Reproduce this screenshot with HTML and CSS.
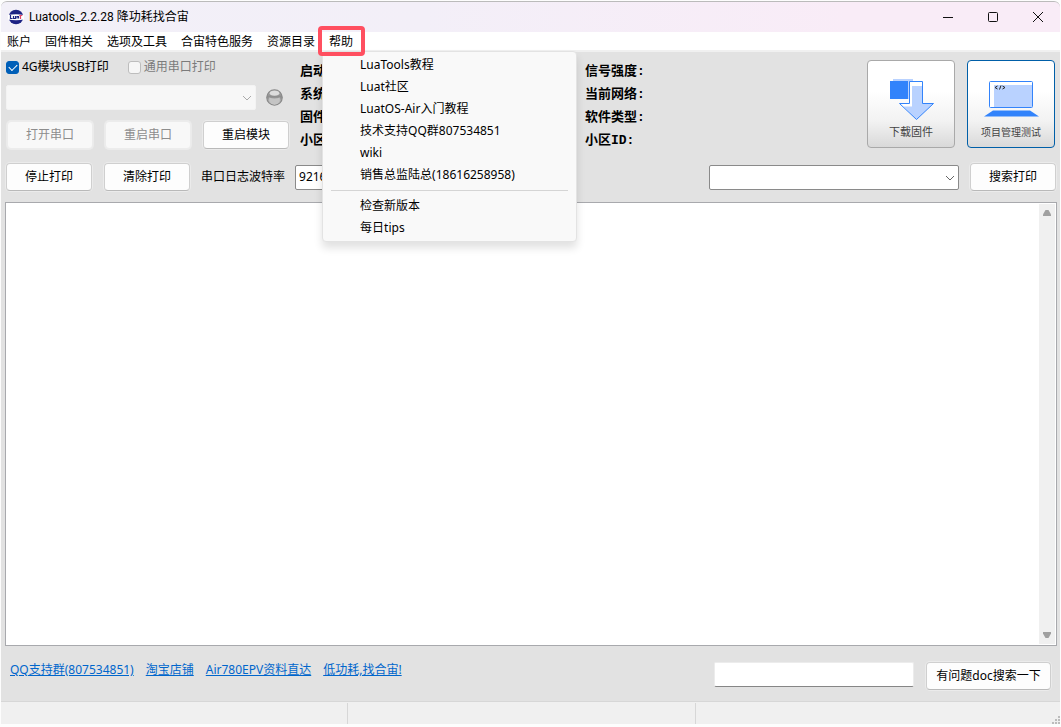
FILE: index.html
```html
<!DOCTYPE html>
<html lang="zh-CN">
<head>
<meta charset="utf-8">
<title>Luatools_2.2.28 降功耗找合宙</title>
<link rel="stylesheet" href="styles.css">
</head>
<body>
<div class="window">
  <header class="titlebar">
    <svg class="logo" viewBox="0 0 16 16" aria-hidden="true">
      <circle cx="8" cy="8" r="7.300" fill="#1d2384"/>
      <path d="M0 6q8-1.500 16 0v4.500q-8 1.500-16 0z" fill="#fff"/>
      <path d="M2.500 6v3.500h2M5.500 7v2.500h2V7" stroke="#1d2384" stroke-width="1.200" fill="none"/>
      <path d="M9 9.500V7.500h1.500v2" stroke="#1d2384" stroke-width="1.200" fill="none"/>
      <path d="M11.300 6.500h3M12.500 6.500v3.500" stroke="#e0456a" stroke-width="1.200" fill="none"/>
    </svg>
    <h1 class="title">Luatools_2.2.28 降功耗找合宙</h1>
    <div class="window-controls">
      <button class="window-button" type="button" aria-label="最小化"><svg viewBox="0 0 12 12"><path d="M1 6.500h10"/></svg></button>
      <button class="window-button" type="button" aria-label="最大化"><svg viewBox="0 0 12 12"><rect x="1.500" y="1.500" width="9" height="9" rx="1"/></svg></button>
      <button class="window-button" type="button" aria-label="关闭"><svg viewBox="0 0 12 12"><path d="M1 1l10 10M11 1L1 11"/></svg></button>
    </div>
  </header>

  <nav class="menubar">
    <button class="menu-title" type="button">账户</button>
    <button class="menu-title" type="button">固件相关</button>
    <button class="menu-title" type="button">选项及工具</button>
    <button class="menu-title" type="button">合宙特色服务</button>
    <button class="menu-title" type="button">资源目录</button>
    <div class="menu-open">
      <button class="menu-title menu-title-active" type="button" aria-expanded="true">帮助</button>
      <div class="menu" role="menu">
        <button class="menu-item" type="button" role="menuitem">LuaTools教程</button>
        <button class="menu-item" type="button" role="menuitem">Luat社区</button>
        <button class="menu-item" type="button" role="menuitem">LuatOS-Air入门教程</button>
        <button class="menu-item" type="button" role="menuitem">技术支持QQ群807534851</button>
        <button class="menu-item" type="button" role="menuitem">wiki</button>
        <button class="menu-item" type="button" role="menuitem">销售总监陆总(18616258958)</button>
        <hr class="menu-separator">
        <button class="menu-item" type="button" role="menuitem">检查新版本</button>
        <button class="menu-item" type="button" role="menuitem">每日tips</button>
      </div>
    </div>
  </nav>

  <main class="content">
    <section class="top">
      <div class="port">
        <div class="checks">
          <label class="check"><input type="checkbox" checked>4G模块USB打印</label>
          <label class="check check-disabled"><input type="checkbox" disabled>通用串口打印</label>
        </div>
        <div class="port-row">
          <div class="combo combo-port">
            <select class="select" disabled aria-label="串口"><option></option></select>
            <svg class="chevron" viewBox="0 0 10 6"><path d="M1 1l4 4 4-4"/></svg>
          </div>
          <svg class="led" viewBox="0 0 16 16" aria-hidden="true">
            <defs><linearGradient id="led" x2="0" y2="1"><stop offset="0" stop-color="#bbb"/><stop offset=".45" stop-color="#8d8d8d"/><stop offset="1" stop-color="#d8d8d8"/></linearGradient></defs>
            <circle cx="8" cy="8" r="7.300" fill="url(#led)" stroke="#888" stroke-width="1"/>
            <ellipse cx="8" cy="4" rx="4.500" ry="2.300" fill="#ddd"/>
            <path d="M3 8q5 2 10 0v3l-2 2.500q-3 1.500-6 0L3 11z" fill="#c4c4c4"/>
          </svg>
        </div>
        <div class="buttons">
          <button class="button" type="button" disabled>打开串口</button>
          <button class="button" type="button" disabled>重启串口</button>
          <button class="button" type="button">重启模块</button>
        </div>
      </div>
      <div class="info info-left">
        <span>启动</span><span>系统</span><span>固件</span><span>小区</span>
      </div>
      <div class="info">
        <span>信号强度:</span><span>当前网络:</span><span>软件类型:</span><span>小区ID:</span>
      </div>
      <div class="actions">
        <button class="action" type="button">
          <svg class="action-art" viewBox="0 0 70 44" aria-hidden="true">
            <path d="M17 2h20v20H17z" fill="#b9d2ff"/>
            <path d="M14 4h18v18H14z" fill="#3283fb"/>
            <path d="M33.500 4.500h13v22h11L40.500 42.500l-17-16h10z" fill="#fff"/>
            <path d="M36 9h10.500v17.500h11L40.500 42.500l-13-13H36z" fill="#b9d2ff"/>
            <path d="M33.500 4.500h13v22h11L40.500 42.500l-17-16h10z" fill="none" stroke="#3283fb"/>
          </svg>
          <span class="action-text action-text-wide">下载固件</span>
        </button>
        <button class="action action-focus" type="button">
          <svg class="action-art" viewBox="0 0 70 44" aria-hidden="true">
            <rect x="13.500" y="4.500" width="43" height="26" rx="1" fill="#fff"/>
            <path d="M18 8h38v22H18z" fill="#b9d2ff"/>
            <rect x="13.500" y="4.500" width="43" height="26" rx="1" fill="none" stroke="#3283fb"/>
            <path d="M21.500 9l-2.500 1.500 2.500 1.500M25 8.500l-1.500 4M26.500 9l2.500 1.500-2.500 1.500" fill="none" stroke="#222"/>
            <path d="M17 33.500h37l9 6H8z" fill="#3283fb"/>
          </svg>
          <span class="action-text">项目管理测试</span>
        </button>
      </div>
    </section>

    <section class="toolbar">
      <div class="buttons">
        <button class="button" type="button">停止打印</button>
        <button class="button" type="button">清除打印</button>
      </div>
      <label class="baud-label" for="baud">串口日志波特率</label>
      <div class="combo combo-baud">
        <select class="select" id="baud"><option>921600</option></select>
      </div>
      <div class="combo combo-search">
        <select class="select" aria-label="搜索内容"><option></option></select>
        <svg class="chevron" viewBox="0 0 10 6"><path d="M1 1l4 4 4-4"/></svg>
      </div>
      <button class="button" type="button">搜索打印</button>
    </section>

    <section class="log">
      <textarea class="log-text" aria-label="日志"></textarea>
      <div class="scrollbar" aria-hidden="true">
        <svg viewBox="0 0 10 8"><path d="M3.500 1h3L9 5.500V7H1V5.500z"/></svg>
        <svg viewBox="0 0 10 8"><path d="M3.500 7h3L9 2.500V1H1v1.500z"/></svg>
      </div>
    </section>

    <footer class="footer">
      <div class="links">
        <a href="#qq">QQ支持群(807534851)</a>
        <a href="#taobao">淘宝店铺</a>
        <a href="#air780epv">Air780EPV资料直达</a>
        <a href="#lowpower">低功耗,找合宙!</a>
      </div>
      <input class="doc-input" type="text" aria-label="文档搜索">
      <button class="button button-doc" type="button">有问题doc搜索一下</button>
    </footer>
  </main>

  <div class="statusbar">
    <div class="status-cell"></div>
    <div class="status-cell"></div>
    <div class="status-cell"></div>
    <svg class="grip" viewBox="0 0 9 9" aria-hidden="true"><path d="M7 1h2v2H7zM4 4h2v2H4zM7 4h2v2H7zM1 7h2v2H1zM4 7h2v2H4zM7 7h2v2H7z"/></svg>
  </div>
</div>
</body>
</html>
```

FILE: styles.css
```css
* {
  box-sizing: border-box;
}

body {
  margin: 0;
  background: #fdfdfd;
}

body,
button,
input,
select,
textarea {
  font: 12px/16px "Noto Sans", "Noto Sans CJK SC", sans-serif;
  color: #000;
}

.window {
  display: flex;
  flex-direction: column;
  min-height: 100vh;
  padding: 1px 1px 3px;
}

/* Title bar */
.titlebar {
  display: flex;
  align-items: center;
  height: 31px;
  padding-left: 7px;
  border-top: 1px solid #bbb;
  border-radius: 6px 6px 0 0;
  background: linear-gradient(90deg, #f2f0f8, #f3eff8 40%, #f9ecf7 80%);
}

.logo {
  width: 16px;
  height: 16px;
}

.title {
  flex: 1;
  margin: 0 0 0 5px;
  font-family: Roboto, "Noto Sans CJK SC", sans-serif;
  font-size: 12px;
  font-weight: 400;
}

.window-controls {
  display: flex;
}

.window-button {
  display: grid;
  place-items: center;
  width: 45px;
  height: 30px;
  padding: 0;
  border: 0;
  background: none;
}

.window-button svg {
  width: 12px;
  height: 12px;
  fill: none;
  stroke: #111;
}

/* Menu bar */
.menubar {
  display: flex;
  gap: 14px;
  height: 20px;
  padding-left: 6px;
  border-bottom: 2px solid #f0f0f0;
  background: #fff;
}

.menu-title {
  padding: 0;
  border: 0;
  background: none;
  line-height: 20px;
}

.menu-open {
  position: relative;
}

.menu-open::after {
  content: "";
  position: absolute;
  z-index: 2;
  inset: -6px -12px -6px -11px;
  border: 4px solid #ff4f60;
  border-radius: 4px;
}

.menu {
  position: absolute;
  z-index: 1;
  top: 19px;
  left: -7px;
  width: 255px;
  padding: 2px 0;
  border: 1px solid #e3e3e3;
  border-radius: 4px;
  background: #f9f9f9;
  box-shadow: 0 6px 9px rgba(0, 0, 0, 0.12);
}

.menu-item {
  display: block;
  width: 100%;
  height: 22px;
  padding: 0 0 0 37px;
  border: 0;
  background: none;
  text-align: left;
}

.menu-separator {
  height: 1px;
  margin: 4px 8px;
  border: 0;
  background: #d5d5d5;
}

/* Content */
.content {
  display: flex;
  flex: 1;
  flex-direction: column;
  background: #e2e2e2;
}

.top {
  display: flex;
  padding: 8px 5px 0;
}

.port {
  width: 294px;
}

.checks {
  display: flex;
  gap: 19px;
  height: 14px;
}

.check {
  display: flex;
  align-items: center;
  gap: 3px;
}

.check input {
  appearance: none;
  display: grid;
  place-items: center;
  width: 13px;
  height: 13px;
  margin: 0;
  border: 1px solid #bdbdbd;
  border-radius: 3px;
  background: #f6f6f6;
}

.check input:checked {
  border-color: #005fb8;
  background: #005fb8;
}

.check input:checked::before {
  content: "";
  width: 7px;
  height: 4px;
  margin-bottom: 2px;
  border: solid #fff;
  border-width: 0 0 1px 1px;
  transform: rotate(-45deg);
}

.check-disabled {
  color: #7b7b7b;
}

.port-row {
  display: flex;
  align-items: center;
  gap: 10px;
  margin-top: 11px;
}

.led {
  width: 17px;
  height: 17px;
}

.combo {
  position: relative;
  height: 25px;
}

.select {
  appearance: none;
  display: block;
  width: 100%;
  height: 100%;
  padding: 0 3px;
  border: 1px solid #8a8a8a;
  border-radius: 2px;
  background: #fff;
}

.select:disabled {
  border-color: #f3f3f3;
  background: #f7f7f7;
  opacity: 1;
}

.chevron {
  position: absolute;
  top: 10px;
  right: 4px;
  width: 10px;
  height: 6px;
  fill: none;
  stroke: #666;
  pointer-events: none;
}

.select:disabled + .chevron {
  stroke: #aaa;
}

.combo-port {
  width: 250px;
}

.port .buttons {
  margin: 11px 0 0 1px;
}

.buttons {
  display: flex;
  gap: 12px;
}

.button {
  flex: none;
  width: 86px;
  height: 28px;
  padding: 0;
  border: 1px solid #cfcfcf;
  border-bottom-color: #b9b9b9;
  border-radius: 4px;
  background: #fdfdfd;
  box-shadow: 0 0 0 1px #ebebeb;
}

.button:disabled {
  border-color: #ececec;
  background: #f8f8f8;
  color: #8d8d8d;
}

.info {
  display: flex;
  flex: 1;
  flex-direction: column;
  font: bold 13px/23px "Liberation Mono", "Noto Sans CJK SC", monospace;
}

.info-left {
  flex: none;
  width: 285px;
}

.actions {
  display: flex;
  gap: 12px;
}

.action {
  display: flex;
  flex-direction: column;
  align-items: center;
  width: 88px;
  height: 88px;
  padding: 16px 0 0;
  border: 1px solid #a9a9a9;
  border-radius: 4px;
  background: linear-gradient(#fff 35%, #f2f2f2 70%, #d9d9d9);
}

.action-focus {
  border-color: #005fa8;
}

.action-art {
  width: 70px;
  height: 44px;
}

.action-text {
  margin-top: 3px;
  font-size: 10px;
  color: #444;
}

.action-text-wide {
  font-size: 11px;
}

/* Print toolbar */
.toolbar {
  display: flex;
  align-items: center;
  margin-top: 11px;
  padding: 0 5px;
}

.baud-label {
  margin-left: 11px;
}

.combo-baud {
  width: 90px;
  margin-left: 10px;
}

.combo-search {
  width: 250px;
  margin: 0 11px 0 auto;
}

.toolbar > .button {
  margin-right: -1px;
}

/* Log */
.log {
  display: flex;
  flex: 1;
  margin: 11px 3px 0 4px;
  padding: 1px;
  border: 1px solid #a8a9ad;
  background: #fff;
}

.log-text {
  flex: 1;
  border: 0;
  outline: 0;
  resize: none;
}

.scrollbar {
  display: flex;
  flex-direction: column;
  justify-content: space-between;
  align-items: center;
  width: 16px;
  padding: 5px 0;
  background: #f0f0f0;
}

.scrollbar svg {
  width: 10px;
  height: 8px;
  fill: #a0a0a0;
}

/* Footer */
.footer {
  display: flex;
  align-items: flex-start;
  padding: 16px 9px 11px;
}

.links {
  display: flex;
  flex: 1;
  gap: 12px;
}

.links a {
  color: #0066cc;
}

.doc-input {
  width: 200px;
  height: 25px;
  border: 1px solid #ececec;
  border-bottom-color: #868686;
  border-radius: 2px;
  background: #fff;
}

.button-doc {
  width: 125px;
  margin-left: 12px;
}

/* Status bar */
.statusbar {
  position: relative;
  display: grid;
  grid-template-columns: repeat(3, 1fr);
  height: 23px;
  padding: 1px 17px 0 0;
  border-top: 1px solid #d7d7d7;
  background: #f0f0f0;
}

.status-cell {
  border-right: 1px solid #d7d7d7;
}

.status-cell:nth-child(3) {
  border: 0;
}

.grip {
  position: absolute;
  right: 0;
  bottom: 0;
  width: 9px;
  height: 9px;
  fill: #bcbcbc;
}
```
